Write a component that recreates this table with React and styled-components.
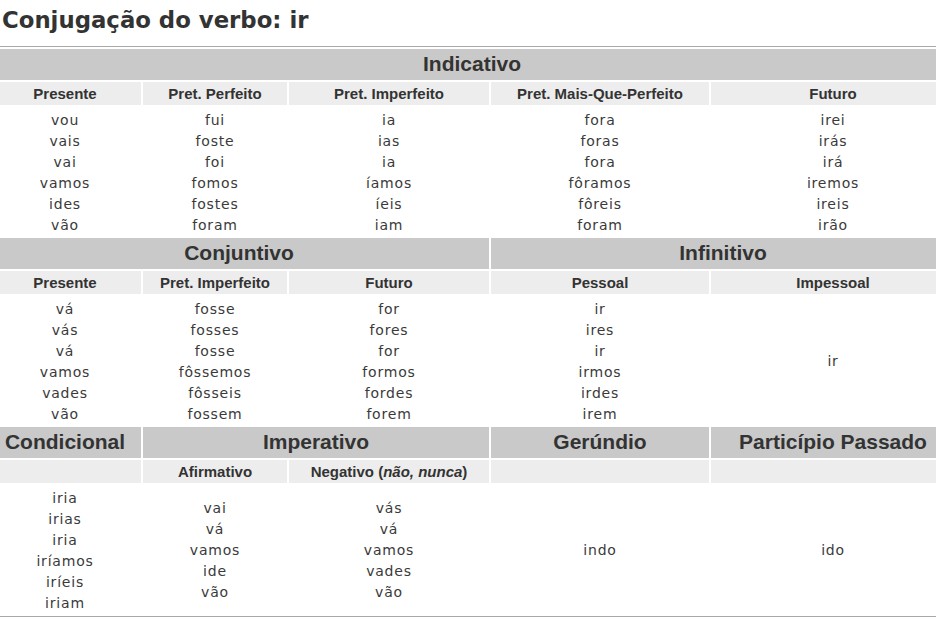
import React from "react";
import styled, { createGlobalStyle } from "styled-components";

const Global = createGlobalStyle`
  html, body { margin: 0; padding: 0; background: #fff; }
  body { overflow: hidden; width: 936px; }
`;

const Page = styled.div`
  width: 936px;
  overflow: hidden;
  padding-top: 5px;
  font-family: "DejaVu Sans", Verdana, sans-serif;
  color: #333;
`;

const Title = styled.h2`
  margin: 0 0 11px 2px;
  font-family: "DejaVu Sans", Verdana, sans-serif;
  font-weight: bold;
  font-size: 22.8px;
  line-height: 30px;
  color: #333;
`;

const Rule = styled.div`
  height: 1px;
  background: #a9a9a9;
  margin-top: ${(p) => p.$top || 0}px;
`;

const Table = styled.div`
  display: grid;
  width: 966px;
  margin: 2px 0 0 -11px;
  grid-template-columns: 152px 144px 200px 218px 244px;
  grid-template-rows: repeat(3, 31px 23px 129px);
  gap: 2px;
`;

const SectionHead = styled.div`
  grid-column: span ${(p) => p.$span || 1};
  background: #c9c9c9;
  display: flex;
  align-items: center;
  justify-content: center;
  padding-bottom: 1px;
  font-family: "Liberation Sans", Arial, sans-serif;
  font-weight: bold;
  font-size: 21px;
  color: #333;
`;

const SubHead = styled.div`
  background: #ededed;
  display: flex;
  align-items: center;
  justify-content: center;
  font-family: "Liberation Sans", Arial, sans-serif;
  font-weight: bold;
  font-size: 15px;
  color: #333;
  white-space: nowrap;
`;

const DataCell = styled.div`
  display: flex;
  flex-direction: column;
  align-items: center;
  justify-content: center;
  padding-top: 2px;
  font-family: "DejaVu Sans", Verdana, sans-serif;
  font-size: 14px;
  line-height: 21px;
  letter-spacing: 0.8px;
  color: #3a3a3a;
`;

const Word = styled.span`
  display: block;
`;

const Data = ({ words }) => (
  <DataCell>
    {words.map((w, i) => (
      <Word key={i}>{w}</Word>
    ))}
  </DataCell>
);

const sp = (s) => s.split(" ");

export default function App() {
  return (
    <Page>
      <Global />
      <Title>Conjugação do verbo: ir</Title>
      <Rule />
      <Table>
        <SectionHead $span={5}>Indicativo</SectionHead>
        <SubHead>Presente</SubHead>
        <SubHead>Pret. Perfeito</SubHead>
        <SubHead>Pret. Imperfeito</SubHead>
        <SubHead>Pret. Mais-Que-Perfeito</SubHead>
        <SubHead>Futuro</SubHead>
        <Data words={sp("vou vais vai vamos ides vão")} />
        <Data words={sp("fui foste foi fomos fostes foram")} />
        <Data words={sp("ia ias ia íamos íeis iam")} />
        <Data words={sp("fora foras fora fôramos fôreis foram")} />
        <Data words={sp("irei irás irá iremos ireis irão")} />

        <SectionHead $span={3}>Conjuntivo</SectionHead>
        <SectionHead $span={2}>Infinitivo</SectionHead>
        <SubHead>Presente</SubHead>
        <SubHead>Pret. Imperfeito</SubHead>
        <SubHead>Futuro</SubHead>
        <SubHead>Pessoal</SubHead>
        <SubHead>Impessoal</SubHead>
        <Data words={sp("vá vás vá vamos vades vão")} />
        <Data words={sp("fosse fosses fosse fôssemos fôsseis fossem")} />
        <Data words={sp("for fores for formos fordes forem")} />
        <Data words={sp("ir ires ir irmos irdes irem")} />
        <Data words={["ir"]} />

        <SectionHead>Condicional</SectionHead>
        <SectionHead $span={2}>Imperativo</SectionHead>
        <SectionHead>Gerúndio</SectionHead>
        <SectionHead>Particípio Passado</SectionHead>
        <SubHead />
        <SubHead>Afirmativo</SubHead>
        <SubHead>
          Negativo (<i>não, nunca</i>)
        </SubHead>
        <SubHead />
        <SubHead />
        <Data words={sp("iria irias iria iríamos iríeis iriam")} />
        <Data words={sp("vai vá vamos ide vão")} />
        <Data words={sp("vás vá vamos vades vão")} />
        <Data words={["indo"]} />
        <Data words={["ido"]} />
      </Table>
      <Rule $top={2} />
    </Page>
  );
}
